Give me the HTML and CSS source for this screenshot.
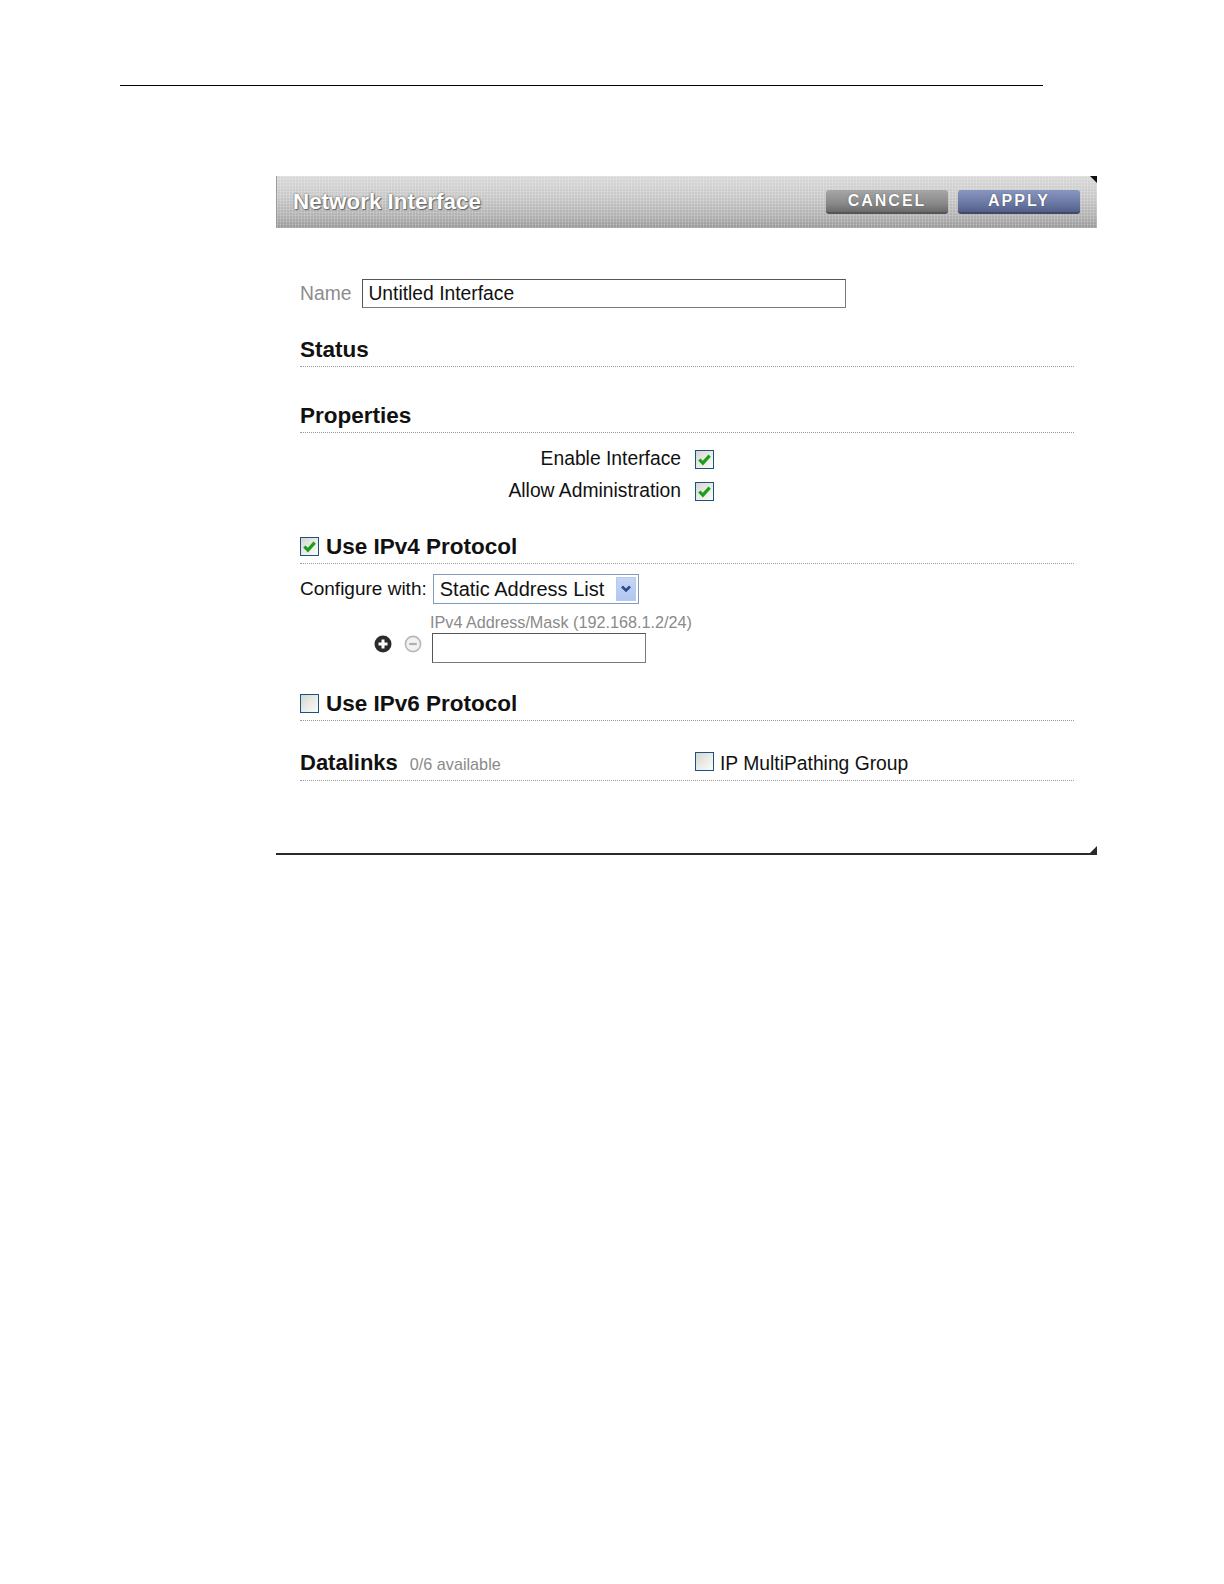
FILE: index.html
```html
<!DOCTYPE html>
<html>
<head>
<meta charset="utf-8">
<title>Network Interface</title>
<link rel="stylesheet" href="styles.css">
</head>
<body>
<div class="page">
  <div class="top-rule"></div>
  <div class="panel">
    <div class="panel-header">
      <div class="panel-title">Network Interface</div>
      <div class="header-buttons">
        <span class="hbtn hbtn-cancel">CANCEL</span>
        <span class="hbtn hbtn-apply">APPLY</span>
      </div>
      <span class="corner-tr"></span>
    </div>
    <div class="panel-body">
      <div class="name-row">
        <span class="name-label">Name</span>
        <div class="text-input name-input">Untitled Interface</div>
      </div>

      <div class="section-head sh-status">Status</div>

      <div class="section-head sh-props">Properties</div>
      <div class="prop-rows">
        <div class="prop-row">
          <span class="prop-label">Enable Interface</span>
          <span class="cb cb-checked"><svg viewBox="0 0 14 14" width="15" height="15"><path d="M2.2 7 L5.5 10.4 L11.8 3.4" fill="none" stroke="#1c9e1c" stroke-width="3"/></svg></span>
        </div>
        <div class="prop-row">
          <span class="prop-label">Allow Administration</span>
          <span class="cb cb-checked"><svg viewBox="0 0 14 14" width="15" height="15"><path d="M2.2 7 L5.5 10.4 L11.8 3.4" fill="none" stroke="#1c9e1c" stroke-width="3"/></svg></span>
        </div>
      </div>

      <div class="section-head sh-ipv4">
        <span class="cb cb-checked"><svg viewBox="0 0 14 14" width="15" height="15"><path d="M2.2 7 L5.5 10.4 L11.8 3.4" fill="none" stroke="#1c9e1c" stroke-width="3"/></svg></span>
        <span>Use IPv4 Protocol</span>
      </div>
      <div class="config-row">
        <span class="config-label">Configure with:</span>
        <div class="select">
          <span class="select-text">Static Address List</span>
          <span class="select-btn"><svg viewBox="0 0 12 10" width="12" height="10"><path d="M2 2.5 L6 6.5 L10 2.5" fill="none" stroke="#2a4a8a" stroke-width="2.6"/></svg></span>
        </div>
      </div>
      <div class="addr-row">
        <div class="addr-icons">
          <svg class="icon" viewBox="0 0 18 18" width="18" height="18"><circle cx="9" cy="9" r="8.5" fill="#2b2b2b"/><path d="M9 4.5 V13.5 M4.5 9 H13.5" stroke="#fff" stroke-width="3"/></svg>
          <svg class="icon" viewBox="0 0 18 18" width="18" height="18"><circle cx="9" cy="9" r="7.6" fill="#f2f2f2" stroke="#b8b8b8" stroke-width="1.6"/><path d="M5.2 9 H12.8" stroke="#b0b0b0" stroke-width="2.2"/></svg>
        </div>
        <div class="addr-field">
          <div class="addr-label">IPv4 Address/Mask (192.168.1.2/24)</div>
          <div class="text-input addr-input"></div>
        </div>
      </div>

      <div class="section-head sh-ipv6">
        <span class="cb"></span>
        <span>Use IPv6 Protocol</span>
      </div>

      <div class="section-head sh-datalinks">
        <div class="dl-left">
          <span class="dl-title">Datalinks</span>
          <span class="dl-avail">0/6 available</span>
        </div>
        <div class="dl-right">
          <span class="cb"></span>
          <span class="ipmp-label">IP MultiPathing Group</span>
        </div>
      </div>
    </div>
    <div class="panel-bottom"><span class="corner-br"></span></div>
  </div>
</div>
</body>
</html>
```

FILE: styles.css
```css
html, body {
  margin: 0;
  padding: 0;
  background: #ffffff;
}

body {
  font-family: "Liberation Sans", Arial, sans-serif;
  color: #111;
}

.page {
  padding-top: 85px;
}

.top-rule {
  margin-left: 120px;
  width: 923px;
  height: 0;
  border-top: 1px solid #000;
}

.panel {
  margin-left: 276px;
  margin-top: 90px;
  width: 821px;
}

.panel-header {
  position: relative;
  height: 52px;
  box-sizing: border-box;
  padding: 0 17px 0 16px;
  display: flex;
  align-items: center;
  justify-content: space-between;
  background:
    repeating-linear-gradient(90deg, rgba(255,255,255,0.18) 0 1px, rgba(0,0,0,0) 1px 3px),
    repeating-linear-gradient(0deg, rgba(255,255,255,0.15) 0 1px, rgba(0,0,0,0) 1px 3px),
    linear-gradient(180deg, #d8d8d8 0%, #c8c8c8 40%, #b2b2b2 75%, #989898 100%);
  border-left: 1px solid #9a9a9a;
}

.panel-title {
  font-size: 22.4px;
  font-weight: bold;
  color: #fff;
  text-shadow: 0 0 2px #555, 1px 1px 1px #666;
}

.header-buttons {
  display: flex;
  gap: 10px;
}

.hbtn {
  display: flex;
  align-items: center;
  justify-content: center;
  width: 122px;
  height: 24px;
  box-sizing: border-box;
  font-size: 16px;
  font-weight: bold;
  letter-spacing: 2px;
  color: #fff;
  text-shadow: 0 0 1px #333;
  border-radius: 3px;
}

.hbtn-cancel {
  background: linear-gradient(180deg, #a6a6a6 0%, #8a8a8a 60%, #6a6a6a 100%);
  border-bottom: 2px solid #555;
}

.hbtn-apply {
  background: linear-gradient(180deg, #8896bf 0%, #6a78a4 60%, #535f88 100%);
  border-bottom: 2px solid #3f4a6a;
}

.corner-tr {
  position: absolute;
  top: 0;
  right: 0;
  width: 0;
  height: 0;
  border-top: 7px solid #111;
  border-left: 7px solid transparent;
}

.panel-body {
  padding: 51px 23px 72px 24px;
}

.name-row {
  display: flex;
  align-items: center;
  gap: 11px;
}

.name-label {
  font-size: 19.3px;
  color: #8c8c8c;
}

.text-input {
  box-sizing: border-box;
  border: 1px solid #7a7a7a;
  border-top-color: #555;
  border-left-color: #555;
  background: #fff;
}

.name-input {
  width: 484px;
  height: 29px;
  font-size: 19.3px;
  line-height: 27px;
  padding-left: 5px;
  color: #111;
}

.section-head {
  font-size: 22.5px;
  font-weight: bold;
  line-height: 28px;
  padding-bottom: 2px;
  border-bottom: 1px dotted #9a9a9a;
  color: #111;
}

.sh-status {
  margin-top: 28px;
}

.sh-props {
  margin-top: 35px;
}

.prop-rows {
  margin-top: 10px;
}

.prop-row {
  display: grid;
  grid-template-columns: 381px 19px;
  column-gap: 14px;
  align-items: center;
  height: 32px;
}

.prop-label {
  text-align: right;
  font-size: 19.3px;
}

.cb {
  display: inline-flex;
  align-items: center;
  justify-content: center;
  box-sizing: border-box;
  width: 19px;
  height: 19px;
  border: 1px solid #1d5180;
  background: linear-gradient(135deg, #d6d6d0 0%, #eaeae6 50%, #fbfbf8 100%);
  vertical-align: middle;
  flex: none;
}

.cb-checked svg {
  display: block;
}

.sh-ipv4,
.sh-ipv6 {
  display: flex;
  align-items: center;
  gap: 7px;
}

.sh-ipv4 {
  margin-top: 26px;
}

.sh-ipv4 .cb,
.sh-ipv6 .cb {
  margin-top: -2px;
}

.config-row {
  display: flex;
  align-items: center;
  gap: 6px;
  margin-top: 10px;
}

.config-label {
  font-size: 19px;
}

.select {
  display: flex;
  align-items: center;
  justify-content: space-between;
  box-sizing: border-box;
  width: 206px;
  height: 30px;
  border: 1px solid #7f9db9;
  padding: 0 2px 0 6px;
  background: #fff;
}

.select-text {
  font-size: 20px;
}

.select-btn {
  display: flex;
  align-items: center;
  justify-content: center;
  width: 20px;
  height: 24px;
  background: linear-gradient(180deg, #c6d6f6 0%, #b0c6f2 100%);
  border: 1px solid #b8cbef;
  box-sizing: border-box;
}

.addr-row {
  display: flex;
  margin-top: 9px;
}

.addr-icons {
  width: 132px;
  display: flex;
  justify-content: flex-end;
  align-items: flex-end;
  gap: 12px;
  padding-right: 10px;
  padding-bottom: 10px;
  box-sizing: border-box;
}

.icon {
  display: block;
}

.addr-field {
  display: flex;
  flex-direction: column;
}

.addr-label {
  font-size: 16.2px;
  line-height: 18px;
  color: #8a8a8a;
  margin-left: -2px;
}

.addr-input {
  margin-top: 2px;
  width: 214px;
  height: 30px;
}

.sh-ipv6 {
  margin-top: 27px;
}

.sh-datalinks {
  margin-top: 27px;
  display: grid;
  grid-template-columns: 395px 1fr;
  align-items: center;
}

.dl-left {
  display: flex;
  align-items: baseline;
  gap: 12px;
}

.dl-title {
  font-size: 22px;
}

.dl-avail {
  font-size: 16.2px;
  font-weight: normal;
  color: #8a8a8a;
}

.dl-right {
  display: flex;
  align-items: center;
  gap: 6px;
}

.dl-right .cb {
  margin-top: -4px;
}

.ipmp-label {
  font-size: 19.3px;
  font-weight: normal;
  margin-top: 2px;
}

.panel-bottom {
  position: relative;
  height: 2px;
  background: #2a2a2a;
}

.corner-br {
  position: absolute;
  right: 0;
  bottom: 0;
  width: 0;
  height: 0;
  border-bottom: 9px solid #2a2a2a;
  border-left: 9px solid transparent;
}
```
